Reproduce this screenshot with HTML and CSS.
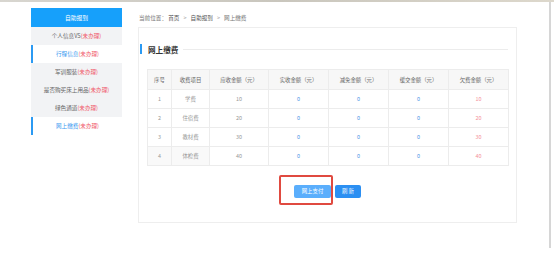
FILE: index.html
```html
<!DOCTYPE html>
<html lang="zh-CN">
<head>
  <meta charset="UTF-8">
  <title>网上缴费</title>
  <link rel="stylesheet" href="styles.css">
</head>
<body>
  <div class="topline"></div>
  <div class="page">
    <div class="sidebar">
      <div class="side-head">自助报到</div>
      <div class="side-item">个人信息VS<span class="todo">(未办理)</span></div>
      <div class="side-item active">行程信息<span class="todo">(未办理)</span></div>
      <div class="side-item">军训服装<span class="todo">(未办理)</span></div>
      <div class="side-item">是否购买床上用品<span class="todo">(未办理)</span></div>
      <div class="side-item">绿色通道<span class="todo">(未办理)</span></div>
      <div class="side-item active">网上缴费<span class="todo">(未办理)</span></div>
    </div>

    <div class="main">
      <div class="crumb">当前位置： <b>首页</b><i>&gt;</i><b>自助报到</b><i>&gt;</i>网上缴费</div>
      <div class="panel">
        <div class="title"><span>网上缴费</span></div>
        <table class="fees">
          <colgroup>
            <col style="width:24px"><col style="width:38px"><col style="width:59px">
            <col style="width:60px"><col style="width:60px"><col style="width:60px"><col style="width:60px">
          </colgroup>
          <tr><th>序号</th><th>收费项目</th><th>应收金额（元）</th><th>实收金额（元）</th><th>减免金额（元）</th><th>缓交金额（元）</th><th>欠费金额（元）</th></tr>
          <tr><td>1</td><td>学费</td><td>10</td><td class="blue">0</td><td class="blue">0</td><td class="blue">0</td><td class="red">10</td></tr>
          <tr><td>2</td><td>住宿费</td><td>20</td><td class="blue">0</td><td class="blue">0</td><td class="blue">0</td><td class="red">20</td></tr>
          <tr><td>3</td><td>教材费</td><td>30</td><td class="blue">0</td><td class="blue">0</td><td class="blue">0</td><td class="red">30</td></tr>
          <tr class="last"><td>4</td><td>体检费</td><td>40</td><td class="blue">0</td><td class="blue">0</td><td class="blue">0</td><td class="red">40</td></tr>
        </table>
        <div class="actions">
          <div class="mark"></div>
          <button class="btn pay">网上支付</button>
          <button class="btn">刷 新</button>
        </div>
      </div>
    </div>
  </div>
</body>
</html>
```

FILE: styles.css
```css
html, body { margin: 0; padding: 0; background: #fff; }
body { font-family: "Noto Sans CJK SC", "Noto Sans", sans-serif; color: #666; width: 554px; height: 257px; overflow: hidden; }
.topline { height: 2px; background: linear-gradient(90deg, #d8d6d0, #c9c6bd 50%, #ddd8cc); }
.page { display: flex; width: 551px; height: 246px; border-right: 2px solid #d6d6d6; padding: 6px 0 0 31px; box-sizing: border-box; }

.sidebar { width: 91px; flex: none; }
.side-head { height: 19px; line-height: 19px; background: #16a0fb; color: #fff; text-align: center; font-size: 5.8px; }
.side-item { height: 18px; line-height: 18px; background: #f2f3f5; text-align: center; font-size: 5.6px; color: #666; }
.side-item.active { background: #fff; color: #3d9bf0; border-left: 2px solid #2b9af3; }
.todo { color: #f0596a; }

.main { margin-left: 16px; width: 379px; }
.crumb { height: 19px; line-height: 21px; font-size: 5.6px; color: #777; padding-left: 1px; }
.crumb b { font-weight: normal; color: #555; }
.crumb i { font-style: normal; color: #aaa; margin: 0 4px; }

.panel { border: 1px solid #eee; height: 196px; box-sizing: border-box; padding-top: 16px; }
.title { display: flex; align-items: center; height: 10px; margin-left: 1px; margin-right: 8px; border-left: 2px solid #2b9af3; }
.title span { font-size: 7.6px; font-weight: bold; color: #333; padding: 0 5px 0 6px; }
.title::after { content: ""; flex: 1; height: 1px; background: #ececec; }

.fees { border-collapse: collapse; margin: 15px 0 0 8px; table-layout: fixed; width: 361px; }
.fees th, .fees td { border: 1px solid #ececec; text-align: center; font-weight: normal; padding: 0; }
.fees th { height: 19px; background: #f7f7f7; font-size: 5.4px; color: #666; }
.fees td { height: 18px; font-size: 5.4px; color: #999; }
.fees tr.last td:nth-child(-n+2) { background: #f9f9f9; }
.fees td.blue { color: #4f95e6; }
.fees td.red { color: #f4939b; }

.actions { position: relative; display: flex; justify-content: center; gap: 4px; margin-top: 19px; }
.btn { height: 13px; padding: 0 7px; border: none; border-radius: 2px; background: #2b8ff2; color: #fff; font-family: inherit; font-size: 5.4px; line-height: 13px; }
.btn.pay { background: #5aaefc; width: 37px; }
.mark { position: absolute; left: 140px; top: -10px; width: 50px; height: 26px; border: 2px solid #e04a40; border-radius: 2px; }
```
